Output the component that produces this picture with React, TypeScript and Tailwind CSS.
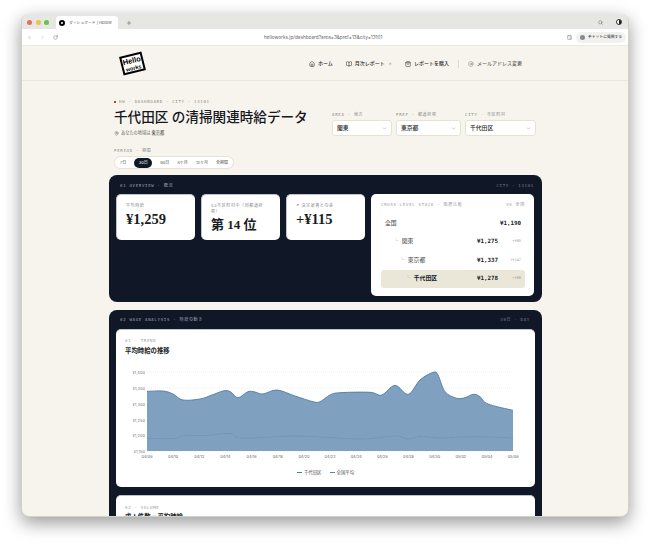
import { ArrowUpRight, AtSign, BookOpen, ChevronDown, ChevronLeft, ChevronRight, House, MapPin, PanelRight, Plus, RotateCw, Search, ShoppingBag } from "lucide-react";

const MONO = "font-['DejaVu_Sans_Mono','Noto_Sans_CJK_JP',monospace]";
const SERIF = "font-['Liberation_Serif','Noto_Sans_CJK_JP',serif]";

const trend: [number, number][] = [
  [147, 391.3], [163, 391], [173, 394], [183, 400], [200, 399], [212, 395], [223, 391], [230, 391.5], [238, 397.7],
  [248, 391.7], [255, 392], [263, 394], [277, 390], [295, 396], [313, 401.7], [320, 401.7], [330, 395],
  [340, 392.7], [370, 392.3], [381.7, 395], [395, 385.3], [408.3, 394.3], [420, 380], [433.3, 372.3], [438, 375],
  [445, 391.7], [456.7, 398.3], [465, 397.7], [473.3, 394.3], [480, 396.7], [488, 404], [513, 410.3],
];
const average: [number, number][] = [
  [147, 438.5], [175, 438.5], [183, 435.5], [205, 435.5], [223, 433.5], [232, 434], [240, 438], [262, 437.5],
  [290, 436], [320, 437], [363, 439], [395, 436], [408, 439], [420, 436.5], [440, 438], [460, 437], [487, 437], [513, 438],
];

// catmull-rom through the points, y is offset by the top of the svg
const smooth = (pts: [number, number][]) => {
  const p = pts.map(([x, y]) => [x - 116, y - 355]);
  let d = `M${p[0][0]} ${p[0][1]}`;
  for (let i = 0; i < p.length - 1; i++) {
    const a = p[Math.max(i - 1, 0)];
    const b = p[i];
    const c = p[i + 1];
    const e = p[Math.min(i + 2, p.length - 1)];
    d += ` C${(b[0] + (c[0] - a[0]) / 6).toFixed(1)} ${(b[1] + (c[1] - a[1]) / 6).toFixed(1)} ${(c[0] - (e[0] - b[0]) / 6).toFixed(1)} ${(c[1] - (e[1] - b[1]) / 6).toFixed(1)} ${c[0]} ${c[1]}`;
  }
  return d;
};

const BrowserChrome = () => (
  <div className="shrink-0">
    <div className="flex h-[15px] items-end bg-[#e6e6e3] pl-[5px] pr-[6px]">
      <div className="mb-[4px] flex gap-[3.5px]">
        <span className="h-[5px] w-[5px] rounded-full bg-[#ec6a5e]" />
        <span className="h-[5px] w-[5px] rounded-full bg-[#f4bf4f]" />
        <span className="h-[5px] w-[5px] rounded-full bg-[#61c554]" />
      </div>
      <div className="ml-[7px] flex h-[13px] w-[62px] items-center gap-[4px] rounded-t-[4px] bg-white pl-[3px]">
        <span className="h-[6px] w-[6px] rounded-full border-[2px] border-black" />
        <span className="text-[3.8px] leading-none text-[#555]">ダッシュボード | HelloW</span>
      </div>
      <Plus className="mb-[3px] ml-[8px] h-[6px] w-[6px] text-[#555]" />
      <div className="mb-[4px] ml-auto flex items-center gap-[13px] pr-0">
        <Search className="h-[5px] w-[5px] text-[#555]" />
        <span className="h-[6px] w-[6px] rounded-full border border-[#333] bg-[linear-gradient(90deg,#fff_50%,#222_50%)]" />
      </div>
    </div>
    <div className="flex h-[17px] items-center border-b border-[#eceae4] bg-white pl-[5px] pr-[2px]">
      <ChevronLeft className="h-[5px] w-[5px] text-[#777]" />
      <ChevronRight className="ml-[8px] h-[5px] w-[5px] text-[#aaa]" />
      <RotateCw className="ml-[8px] h-[5px] w-[5px] text-[#666]" />
      <span className="ml-[206px] text-[4.7px] leading-none text-[#666]">helloworks.jp/dashboard?area=3&amp;pref=13&amp;city=13101</span>
      <PanelRight className="ml-auto h-[5px] w-[5px] text-[#666]" />
      <div className="ml-[4px] flex h-[11px] w-[50px] items-center gap-[3px] rounded-full bg-[#f1f1f0] pl-[4px]">
        <span className="h-[5px] w-[5px] rounded-full bg-[#8a8a8a]" />
        <span className="text-[3.8px] font-medium leading-none text-[#444]">チャットに質問する</span>
      </div>
    </div>
  </div>
);

const Logo = () => (
  <div className="flex h-[19px] w-[23px] -rotate-[14deg] flex-col items-center justify-center border-[2px] border-black bg-white font-['Liberation_Sans',sans-serif] font-bold text-black">
    <span className="text-[7.5px] leading-[8px]">Hello</span>
    <span className="text-[5.4px] leading-[6px]">works</span>
  </div>
);

const Nav = () => (
  <header className="flex h-[35px] shrink-0 items-center border-b border-[#ebe7dc] pl-[99px] pt-[1px]">
    <Logo />
    <nav className="ml-[165px] flex items-center text-[5px] font-medium text-[#2b2b2b]">
      <House className="h-[6px] w-[6px]" />
      <span className="ml-[3px]">ホーム</span>
      <BookOpen className="ml-[13px] h-[6px] w-[6px]" />
      <span className="ml-[3px]">月次レポート</span>
      <ArrowUpRight className="ml-[3px] h-[4px] w-[4px] text-[#888]" />
      <ShoppingBag className="ml-[13px] h-[6px] w-[6px]" />
      <span className="ml-[3px]">レポートを購入</span>
      <span className="ml-[9px] h-[8px] w-px bg-[#ddd9cb]" />
      <AtSign className="ml-[9px] h-[6px] w-[6px] text-[#888]" />
      <span className="ml-[3px] text-[#666]">メールアドレス変更</span>
    </nav>
  </header>
);

const Tiny = ({ children, className = "" }: { children: React.ReactNode; className?: string }) => (
  <div className={`${MONO} text-[4px] uppercase leading-none tracking-[0.18em] ${className}`}>{children}</div>
);

const SelectBox = ({ label, value, width }: { label: string; value: string; width: string }) => (
  <div className={width}>
    <Tiny className="mb-[3px] text-[#888]">{label}</Tiny>
    <div className="flex h-[16px] items-center justify-between rounded-[3px] border border-[#e6e2d4] bg-white px-[4px] text-[5.8px] font-medium text-[#2a2a2a]">
      {value}
      <ChevronDown className="h-[5px] w-[5px] text-[#888]" />
    </div>
  </div>
);

const Heading = () => (
  <div className="flex h-[94px] shrink-0 justify-between pl-[5px] pr-[6px] pt-[19px]">
    <div>
      <div className="flex items-center gap-[3px]">
        <span className="h-[2px] w-[2px] bg-[#c2452d]" />
        <Tiny className="text-[#888]">HW · DASHBOARD · CITY · 13101</Tiny>
      </div>
      <h1 className={`${SERIF} mt-[5px] text-[13.6px] font-medium leading-[17px] text-[#15171f]`}>千代田区 の清掃関連時給データ</h1>
      <div className="mt-[5px] flex items-center gap-[2px] text-[4.2px] leading-none text-[#666]">
        <MapPin className="h-[5px] w-[5px]" />
        <span>あなたの地域は <span className="border-b border-[#ddd9cb] text-[#333]">東京都</span></span>
      </div>
      <Tiny className="mt-[13px] text-[#888]">PERIOD · 期間</Tiny>
      <div className="mt-[3px] flex h-[13px] w-[120px] items-center justify-between rounded-full border border-[#e6e2d4] bg-white px-[1px] text-[4px] text-[#555]">
        <span className="ml-[4px]">7日</span>
        <span className="flex h-[10px] w-[18px] items-center justify-center rounded-full bg-gray-900 text-white">30日</span>
        <span>90日</span>
        <span>6ヶ月</span>
        <span>12ヶ月</span>
        <span className="mr-[4px]">全期間</span>
      </div>
    </div>
    <div className="flex gap-[4px] pt-[13px]">
      <SelectBox label="AREA · 地方" value="関東" width="w-[60px]" />
      <SelectBox label="PREF · 都道府県" value="東京都" width="w-[65px]" />
      <SelectBox label="CITY · 市区町村" value="千代田区" width="w-[71px]" />
    </div>
  </div>
);

const Stat = ({ label, value, valueClass = "text-[14.5px] leading-[18px]" }: { label: React.ReactNode; value: string; valueClass?: string }) => (
  <div className="h-[46px] w-[79px] rounded-[5px] border-l border-t border-[#bfc2c9] bg-white px-[9px] pt-[8px]">
    <div className="text-[4px] leading-[6px] tracking-[0.15em] text-[#888]">{label}</div>
    <div className={`${SERIF} mt-[1px] font-bold text-[#1a1c24] ${valueClass}`}>{value}</div>
  </div>
);

const rows = [
  { name: "全国", price: "¥1,190", diff: "", indent: "pl-[4px]", active: false },
  { name: "関東", price: "¥1,275", diff: "+¥85", indent: "pl-[12px]", active: false },
  { name: "東京都", price: "¥1,337", diff: "+¥147", indent: "pl-[18px]", active: false },
  { name: "千代田区", price: "¥1,278", diff: "+¥88", indent: "pl-[24px]", active: true },
];

const Overview = () => (
  <section className="h-[127px] shrink-0 rounded-[8px] bg-gray-900 px-[7px]">
    <div className="flex h-[19px] items-center justify-between pl-[4px] pr-[1px] pt-[2px]">
      <Tiny className="text-[#a0a4ae]">01 OVERVIEW · 概況</Tiny>
      <Tiny className="text-[#7a7f8c]">CITY · 13101</Tiny>
    </div>
    <div className="flex items-start gap-[6px]">
      <Stat label="平均時給" value="¥1,259" />
      <Stat label={<>53市区町村中（同都道府<br />県）</>} value="第 14 位" valueClass="text-[13px] leading-[17px]" />
      <Stat label={<><span className="text-[#c2452d]">↗</span> 決定最賃との差</>} value="+¥115" />
      <div className="h-[102px] w-[163px] rounded-[5px] bg-white pl-[10px] pr-[9px] pt-[9px]">
        <div className="flex items-center justify-between pb-[7px]">
          <Tiny className="text-[#999]">CROSS-LEVEL STACK · 階層比較</Tiny>
          <Tiny className="text-[#999]">VS 全国</Tiny>
        </div>
        {rows.map((r) => (
          <div
            key={r.name}
            className={`flex h-[18.5px] items-center rounded-[3px] pr-[4px] text-[5.8px] ${r.indent} ${r.active ? "bg-[#ebe7d8] font-bold text-[#15171f]" : "text-[#444]"}`}
          >
            <span>{r.diff && <span className="mr-[3px] text-[#aaa]">└</span>}{r.name}</span>
            <span className={`${MONO} ml-auto text-[5.8px] font-bold text-[#15171f]`}>{r.price}</span>
            {r.diff && <span className={`${MONO} w-[23px] text-right text-[3.6px] font-normal text-[#999]`}>{r.diff}</span>}
          </div>
        ))}
      </div>
    </div>
  </section>
);

const dates = ["04/06", "04/10", "04/12", "04/14", "04/16", "04/18", "04/20", "04/22", "04/24", "04/26", "04/28", "04/30", "05/02", "05/04", "05/06"];

const TrendChart = () => {
  const line = smooth(trend);
  const ticks = [
    { label: "¥1,400", y: 17 },
    { label: "¥1,350", y: 33 },
    { label: "¥1,300", y: 49 },
    { label: "¥1,250", y: 65 },
    { label: "¥1,200", y: 80.5 },
    { label: "¥1,150", y: 96 },
  ];
  return (
    <svg viewBox="0 0 418 112" className="block h-[112px] w-[418px]">
      {ticks.map((t) => (
        <g key={t.label}>
          <line x1="31" x2="397" y1={t.y} y2={t.y} stroke="#e4e4e4" strokeWidth="0.6" strokeDasharray="1 1" />
          <text x="29" y={t.y + 1.5} textAnchor="end" fontSize="4" fill="#777" fontFamily="Inter, sans-serif">{t.label}</text>
        </g>
      ))}
      <path d={`${line} L397 96 L31 96 Z`} fill="#80a0bf" />
      <path d={line} fill="none" stroke="#4f7ca8" strokeWidth="0.9" />
      <path d={smooth(average)} fill="none" stroke="#5d86ac" strokeWidth="0.6" strokeDasharray="1.5 1" />
      {dates.map((d, i) => (
        <text key={d} x={31 + i * 26.15} y="103" textAnchor="middle" fontSize="3.8" fill="#666" fontFamily="Inter, sans-serif">{d}</text>
      ))}
    </svg>
  );
};

const WageAnalysis = () => (
  <section className="flex-1 rounded-t-[8px] bg-gray-900 px-[7px] pt-[1px]">
    <div className="flex h-[18px] items-center justify-between pl-[4px] pr-[5px]">
      <Tiny className="text-[#a0a4ae]">02 WAGE ANALYSIS · 時給の動き</Tiny>
      <Tiny className="text-[#7a7f8c]">30日 · DAY</Tiny>
    </div>
    <div className="h-[158px] rounded-[5px] border-t border-[#bfc2c9] bg-white pl-[9px] pt-[9px]">
      <Tiny className="text-[#999]">01 · TREND</Tiny>
      <h2 className={`${SERIF} mt-[4px] text-[6.4px] font-bold leading-[8px] text-[#1a1c24]`}>平均時給の推移</h2>
      <div className="-ml-[9px]">
        <TrendChart />
      </div>
      <div className="mt-[2px] flex justify-center gap-[8px] pr-[9px] text-[4.4px] leading-[7px] text-[#555]">
        <span className="flex items-center gap-[2px]"><span className="h-[1.5px] w-[5px] bg-[#4f7ca8]" />千代田区</span>
        <span className="flex items-center gap-[2px]"><span className="h-[1.5px] w-[5px] bg-[#6b7f9c]" />全国平均</span>
      </div>
    </div>
    <div className="mt-[8px] h-[40px] rounded-[5px] border-t border-[#bfc2c9] bg-white pl-[9px] pt-[10px]">
      <Tiny className="text-[#999]">02 · VOLUME</Tiny>
      <h2 className={`${SERIF} mt-[3px] text-[6.4px] font-bold leading-[8px] text-[#1a1c24]`}>求人件数 × 平均時給</h2>
    </div>
  </section>
);

export default function App() {
  return (
    <div className="h-[545px] w-[650px] overflow-hidden bg-white px-[21px] pt-[14px] font-['Inter','Noto_Sans_CJK_JP',sans-serif]">
      <div className="flex h-[503px] w-[608px] flex-col overflow-hidden rounded-[8px] border-x border-b border-[#d0d0cc] bg-[#f7f4ed] shadow-[0_6px_18px_rgba(0,0,0,0.4)]">
        <BrowserChrome />
        <Nav />
        <main className="ml-[87px] flex w-[433px] flex-1 flex-col overflow-hidden">
          <Heading />
          <div className="flex flex-1 flex-col gap-[8px] overflow-hidden">
            <Overview />
            <WageAnalysis />
          </div>
        </main>
      </div>
    </div>
  );
}
